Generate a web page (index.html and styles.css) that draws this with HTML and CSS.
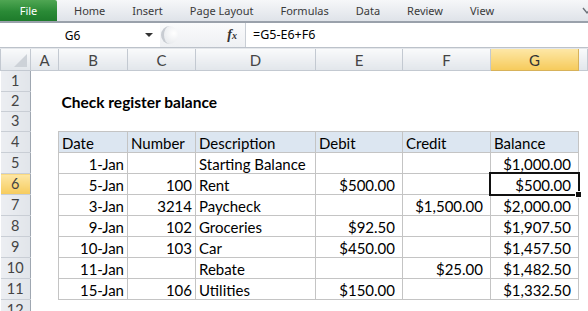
FILE: index.html
```html
<!DOCTYPE html>
<html lang="en">
<head>
  <meta charset="UTF-8">
  <title>Check register balance</title>
  <link rel="stylesheet" href="styles.css">
</head>
<body>
  <div class="ribbon">
    <div class="tab file">File</div>
    <div class="tab">Home</div>
    <div class="tab">Insert</div>
    <div class="tab">Page Layout</div>
    <div class="tab">Formulas</div>
    <div class="tab">Data</div>
    <div class="tab">Review</div>
    <div class="tab">View</div>
    <svg class="ribbon-icon" width="10" height="10" viewBox="0 0 10 10">
      <path d="M1 2 L5 7 L9 2" fill="none" stroke="#6b7078" stroke-width="1.4"/>
    </svg>
  </div>

  <div class="formula-bar">
    <div class="name-box">
      <span class="name">G6</span>
      <span class="caret"></span>
    </div>
    <div class="fx-area">
      <span class="grip"></span>
      <span class="fx">f<small>x</small></span>
    </div>
    <div class="formula">=G5-E6+F6</div>
  </div>

  <table class="sheet">
    <colgroup>
      <col class="w-row">
      <col class="w-a">
      <col class="w-b">
      <col class="w-c">
      <col class="w-d">
      <col class="w-e">
      <col class="w-f">
      <col class="w-g">
      <col>
    </colgroup>
    <tr class="col-head">
      <th class="corner"><span class="corner-tri"></span></th>
      <th>A</th><th>B</th><th>C</th><th>D</th><th>E</th><th>F</th><th class="active">G</th><th></th>
    </tr>
    <tr><th class="row-head">1</th><td></td><td></td><td></td><td></td><td></td><td></td><td></td><td></td></tr>
    <tr><th class="row-head">2</th><td></td><td class="title" colspan="3">Check register balance</td><td></td><td></td><td></td><td></td></tr>
    <tr><th class="row-head">3</th><td></td><td></td><td></td><td></td><td></td><td></td><td></td><td></td></tr>
    <tr class="head">
      <th class="row-head">4</th><td></td>
      <td class="t">Date</td><td class="t">Number</td><td class="t">Description</td><td class="t">Debit</td><td class="t">Credit</td><td class="t">Balance</td><td></td>
    </tr>
    <tr>
      <th class="row-head">5</th><td></td>
      <td class="t num">1-Jan</td><td class="t num"></td><td class="t">Starting Balance</td><td class="t cur"></td><td class="t cur"></td><td class="t cur">$1,000.00</td><td></td>
    </tr>
    <tr>
      <th class="row-head active">6</th><td></td>
      <td class="t num">5-Jan</td><td class="t num">100</td><td class="t">Rent</td><td class="t cur">$500.00</td><td class="t cur"></td><td class="t cur sel">$500.00</td><td></td>
    </tr>
    <tr>
      <th class="row-head">7</th><td></td>
      <td class="t num">3-Jan</td><td class="t num">3214</td><td class="t">Paycheck</td><td class="t cur"></td><td class="t cur">$1,500.00</td><td class="t cur">$2,000.00</td><td></td>
    </tr>
    <tr>
      <th class="row-head">8</th><td></td>
      <td class="t num">9-Jan</td><td class="t num">102</td><td class="t">Groceries</td><td class="t cur">$92.50</td><td class="t cur"></td><td class="t cur">$1,907.50</td><td></td>
    </tr>
    <tr>
      <th class="row-head">9</th><td></td>
      <td class="t num">10-Jan</td><td class="t num">103</td><td class="t">Car</td><td class="t cur">$450.00</td><td class="t cur"></td><td class="t cur">$1,457.50</td><td></td>
    </tr>
    <tr>
      <th class="row-head">10</th><td></td>
      <td class="t num">11-Jan</td><td class="t num"></td><td class="t">Rebate</td><td class="t cur"></td><td class="t cur">$25.00</td><td class="t cur">$1,482.50</td><td></td>
    </tr>
    <tr>
      <th class="row-head">11</th><td></td>
      <td class="t num">15-Jan</td><td class="t num">106</td><td class="t">Utilities</td><td class="t cur">$150.00</td><td class="t cur"></td><td class="t cur">$1,332.50</td><td></td>
    </tr>
    <tr><th class="row-head">12</th><td></td><td></td><td></td><td></td><td></td><td></td><td></td><td></td></tr>
  </table>
</body>
</html>
```

FILE: styles.css
```css
body {
  margin: 0;
  width: 588px;
  height: 311px;
  overflow: hidden;
  background: #fff;
  font-family: "Lato", "Liberation Sans", sans-serif;
  color: #000;
}

/* ribbon tabs */
.ribbon {
  display: flex;
  align-items: center;
  gap: 27px;
  height: 21px;
  background: linear-gradient(#f6f7f9, #dfe3e9);
  border-bottom: 2px solid #9aa1ab;
  font-family: "Noto Sans", "DejaVu Sans", sans-serif;
  font-size: 11px;
  color: #3a3a3a;
}
.tab {
  line-height: 21px;
}
.tab.file {
  width: 57px;
  height: 21px;
  margin-right: -10px;
  text-align: center;
  color: #fff;
  background: linear-gradient(#4fa653, #2a8a36 55%, #1e7b2b);
  border-top-right-radius: 2px;
}
.ribbon-icon {
  margin-left: auto;
  margin-right: -4px;
}

/* formula bar */
.formula-bar {
  display: flex;
  height: 24px;
  background: #fff;
  border-bottom: 1px solid #bcc2ca;
  box-shadow: 0 1px 0 #e4e7eb;
  font-family: "Noto Sans", "DejaVu Sans", sans-serif;
  font-size: 12px;
}
.name-box {
  display: flex;
  align-items: center;
  width: 160px;
}
.name {
  width: 145px;
  text-align: center;
}
.caret {
  width: 0;
  height: 0;
  border-left: 4px solid transparent;
  border-right: 4px solid transparent;
  border-top: 4px solid #333;
}
.fx-area {
  box-sizing: border-box;
  display: flex;
  align-items: center;
  justify-content: space-between;
  width: 86px;
  padding-right: 8px;
  background: linear-gradient(#fafbfc, #eef0f3);
  border-right: 1px solid #c9ced5;
}
.grip {
  width: 14px;
  height: 18px;
  margin-left: 1px;
  border-radius: 50%;
  border-left: 3px solid #c8ccd2;
  background: radial-gradient(circle at 70% 40%, #ffffff, #e2e5e9);
}
.fx {
  font-family: "Liberation Serif", serif;
  font-style: italic;
  font-weight: bold;
  font-size: 14px;
  color: #333;
}
.fx small {
  font-size: 10px;
}
.formula {
  flex: 1;
  padding-left: 7px;
  line-height: 24px;
  font-size: 12.5px;
}

/* worksheet grid */
.sheet {
  border-collapse: collapse;
  table-layout: fixed;
  width: 588px;
  font-size: 15px;
  margin-top: 1px;
}
.w-row { width: 30px; }
.w-a { width: 28px; }
.w-b { width: 69px; }
.w-c { width: 68px; }
.w-d { width: 120px; }
.w-e { width: 87px; }
.w-f { width: 88px; }
.w-g { width: 88px; }

.sheet td {
  height: 20px;
  padding: 0 4px 0 3px;
  border: 0;
  white-space: nowrap;
  overflow: hidden;
  vertical-align: bottom;
  line-height: 18px;
}
.col-head th {
  height: 21px;
  padding: 0;
  font-weight: normal;
  font-size: 15px;
  color: #444;
  background: linear-gradient(#f9fafb, #e2e6eb);
  border: 1px solid #c3c9d1;
  border-top: 0;
}
.col-head th.active {
  background: linear-gradient(#fde7a6, #f6cb5c);
  border-color: #d7b25a;
  color: #333;
}
.corner {
  position: relative;
}
.corner-tri {
  position: absolute;
  right: 3px;
  bottom: 3px;
  width: 0;
  height: 0;
  border-left: 13px solid transparent;
  border-bottom: 13px solid #cdd2d8;
}
.row-head {
  padding: 0;
  font-weight: normal;
  font-size: 14.5px;
  line-height: 18px;
  color: #444;
  background: linear-gradient(90deg, #eceef2, #e1e5ea);
  border-bottom: 1px solid #c9ced5;
  border-right: 1px solid #9fa7b1;
  text-align: center;
  vertical-align: middle;
}
.row-head.active {
  background: linear-gradient(#fde7a6, #f6cb5c);
}

.sheet td.title {
  font-weight: bold;
  font-size: 15.5px;
  overflow: visible;
}
.sheet td.t {
  border: 1px solid #c4c4c4;
}
.head td.t {
  background: #dce6f1;
}
.sheet td.num {
  text-align: right;
  padding-right: 3px;
}
.sheet td.cur {
  text-align: right;
  padding-right: 7px;
}

/* active cell outline and fill handle */
.sheet td.sel {
  position: relative;
  overflow: visible;
}
.sel::after {
  content: '';
  position: absolute;
  inset: -2px -2px -2px -2px;
  border: 2px solid #111;
}
.sel::before {
  content: '';
  position: absolute;
  right: -4px;
  bottom: -4px;
  width: 5px;
  height: 5px;
  background: #111;
  border: 1px solid #fff;
  z-index: 1;
}
```
